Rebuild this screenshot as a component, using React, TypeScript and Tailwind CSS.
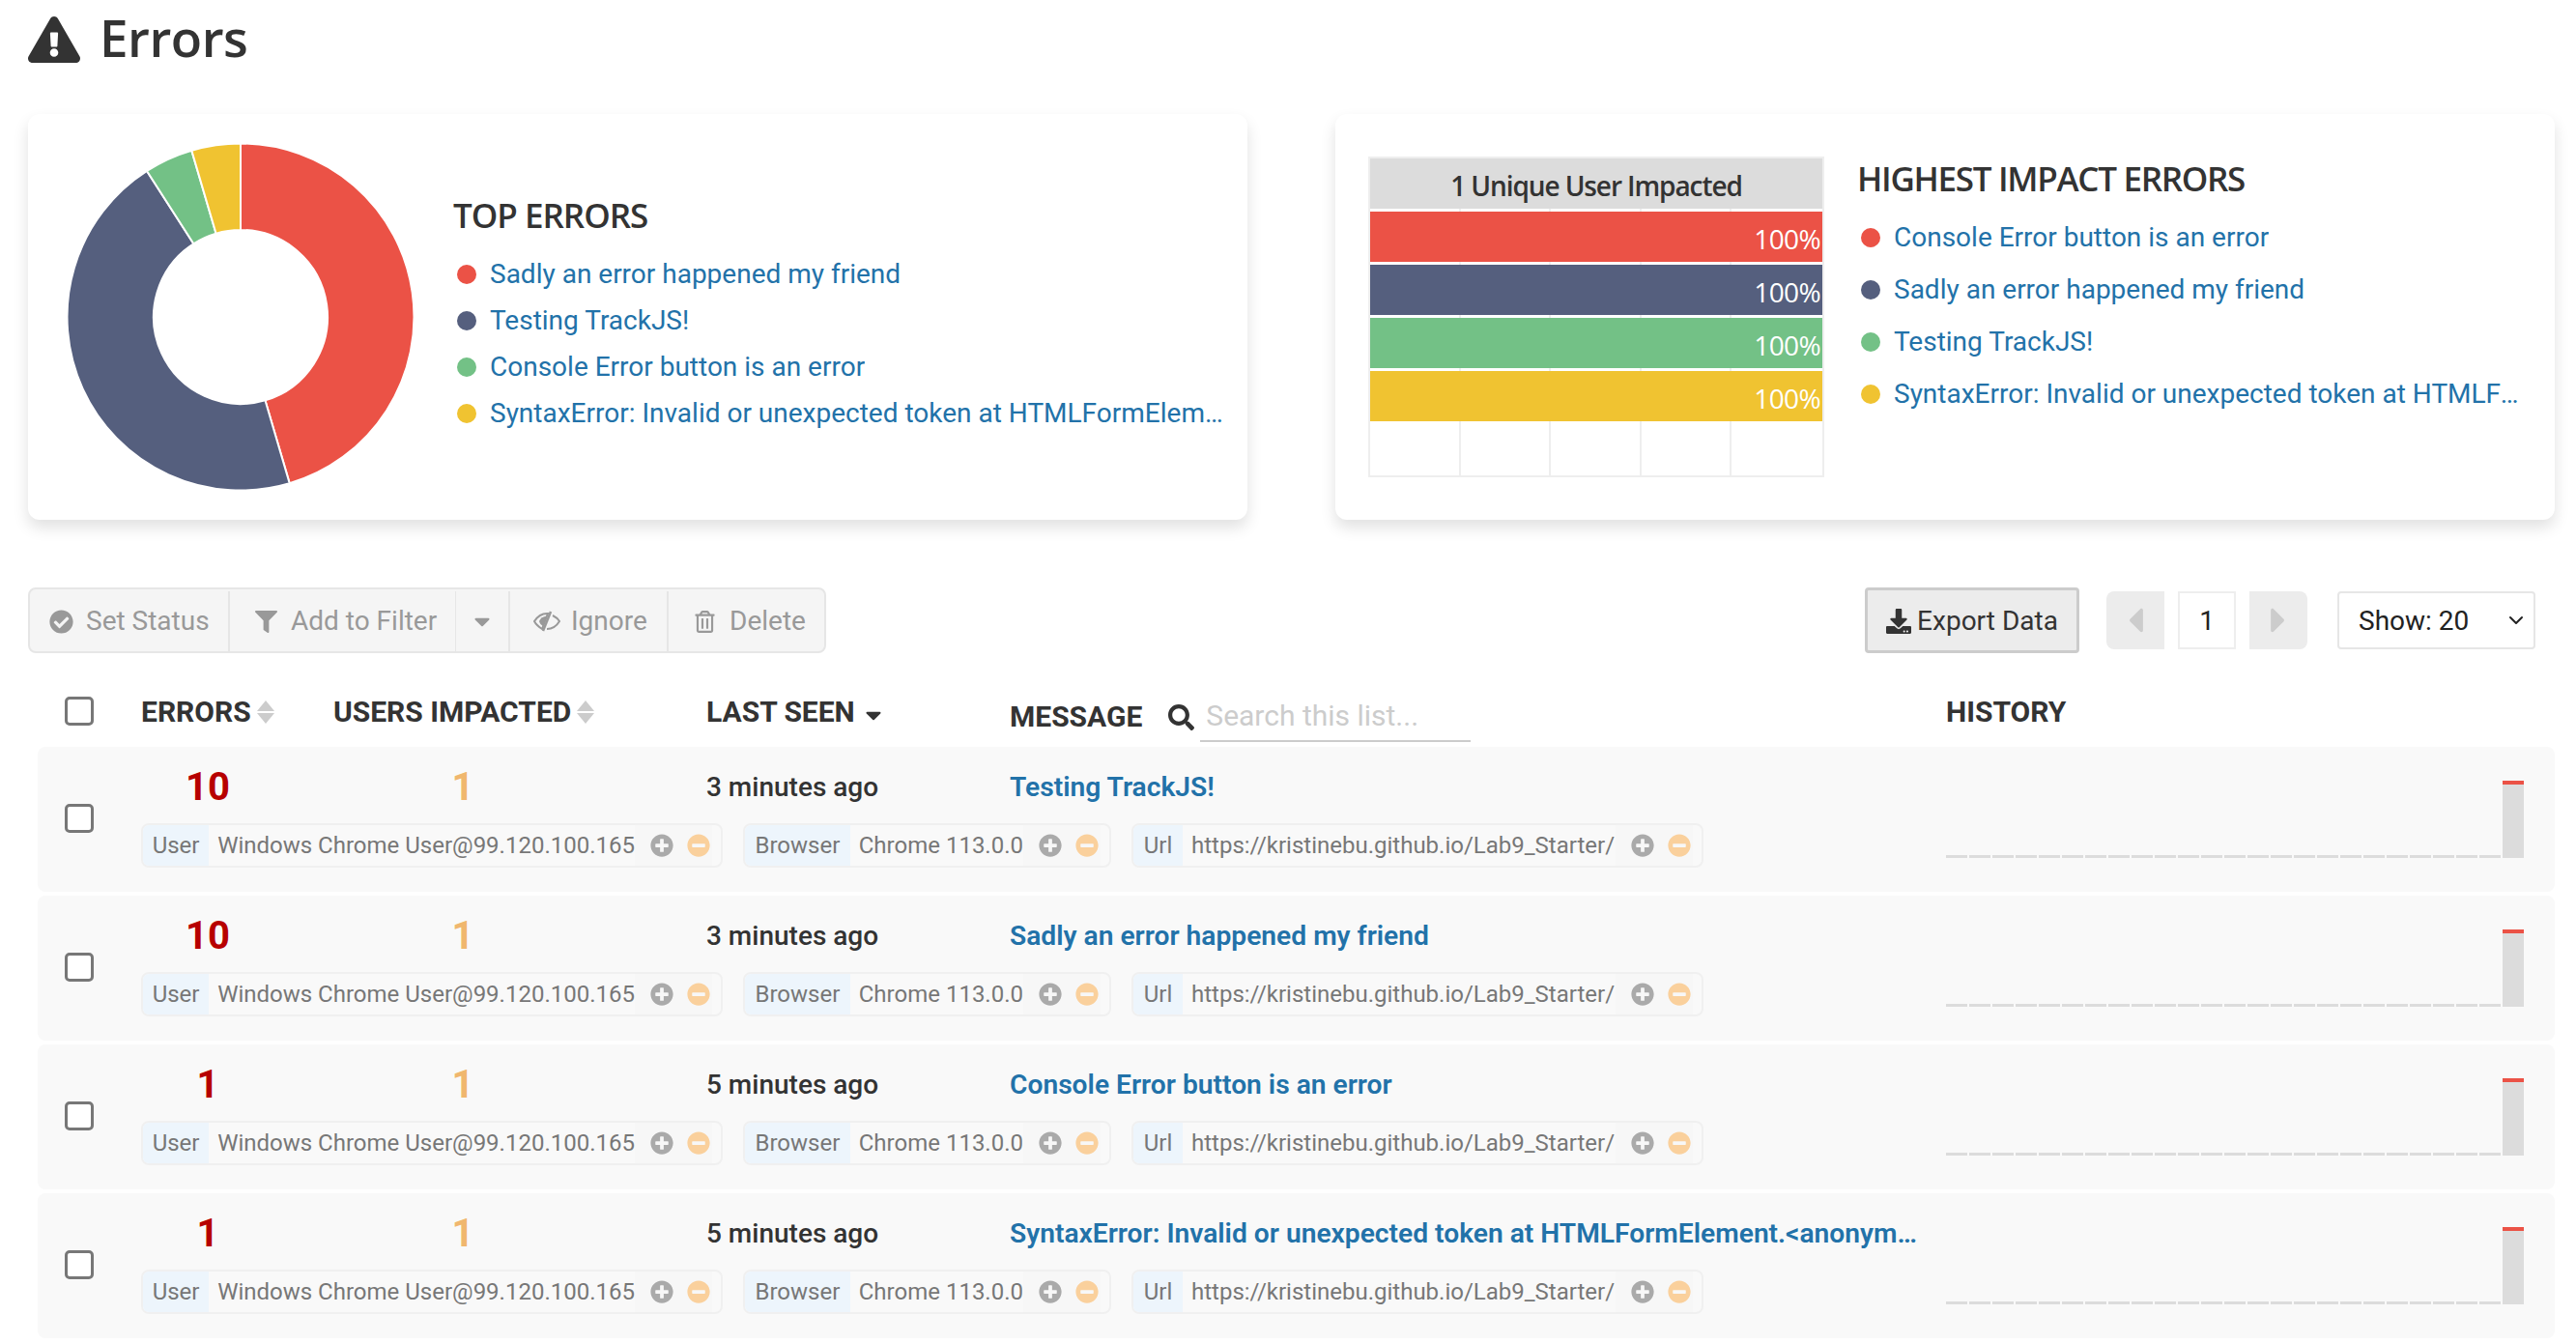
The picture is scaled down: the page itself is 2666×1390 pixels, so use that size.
import {
  FaCaretDown,
  FaCaretLeft,
  FaCaretRight,
  FaCheckCircle,
  FaDownload,
  FaExclamationTriangle,
  FaFilter,
  FaMinusCircle,
  FaPlusCircle,
  FaRegTrashAlt,
  FaSearch,
} from "react-icons/fa";
import { ChevronDown } from "lucide-react";

const RED = "#eb5246";
const BLUE = "#555f7e";
const GREEN = "#73c186";
const YELLOW = "#f0c331";

const arc = (start: number, end: number) => {
  const point = (r: number, deg: number) => {
    const a = (deg * Math.PI) / 180;
    return `${180 + r * Math.sin(a)} ${180 - r * Math.cos(a)}`;
  };
  return `M${point(179.5, start)} A179.5 179.5 0 ${end - start > 180 ? 1 : 0} 1 ${point(179.5, end)} L${point(90, end)} A90 90 0 ${end - start > 180 ? 1 : 0} 0 ${point(90, start)} Z`;
};

const Donut = () => (
  <svg width="360" height="360" viewBox="0 0 360 360" className="shrink-0">
    <path d={arc(0, 163.6)} fill={RED} stroke="#fff" strokeWidth="2" />
    <path d={arc(163.6, 327.3)} fill={BLUE} stroke="#fff" strokeWidth="2" />
    <path d={arc(327.3, 343.6)} fill={GREEN} stroke="#fff" strokeWidth="2" />
    <path d={arc(343.6, 360)} fill={YELLOW} stroke="#fff" strokeWidth="2" />
  </svg>
);

const SortIcon = () => (
  <svg width="18" height="24" viewBox="0 0 18 24" className="ml-[6px] shrink-0 fill-[#ccc]">
    <path d="M9 0 L18 11 L0 11 Z" />
    <path d="M0 13 L18 13 L9 24 Z" />
  </svg>
);

const EyeIcon = () => (
  <svg width="28" height="22" viewBox="0 0 28 22" className="shrink-0">
    <path d="M1 11 C5 5 9 3 14 3 L15 3 L9 19 C6 17 3 15 1 11 Z" fill="none" stroke="#999" strokeWidth="2" />
    <path d="M6 11 C7 8 10 6 14 5.5 L10 16 C8 15 6.5 13 6 11 Z" fill="#999" />
    <path d="M18 1 L10 21" stroke="#999" strokeWidth="2.5" />
    <path d="M20 5 C23 6.5 25.5 8.5 27 11 C24 16 19 19 14 19" fill="none" stroke="#999" strokeWidth="2" />
  </svg>
);

const Legend = ({ items, gap }: { items: { label: string; color: string }[]; gap: string }) => (
  <ul className={`flex flex-col ${gap} font-['Roboto',sans-serif] text-[28px] leading-[34px] text-[#2272a9]`}>
    {items.map((item) => (
      <li key={item.label} className="flex items-center whitespace-nowrap">
        <span className="mr-[14px] ml-[4px] size-[20px] shrink-0 rounded-full" style={{ backgroundColor: item.color }} />
        <span className="min-w-0 truncate">{item.label}</span>
      </li>
    ))}
  </ul>
);

const Tag = ({ label, labelWidth, value, width }: { label: string; labelWidth: string; value: string; width: string }) => (
  <div className={`flex h-[46px] items-center overflow-hidden rounded-[8px] border-2 border-[#f0f0f0] text-[24px] text-[#777] ${width}`}>
    <span className={`flex h-full items-center justify-center bg-[#edf5fc] ${labelWidth}`}>{label}</span>
    <span className="ml-[9px] flex-1 whitespace-nowrap">{value}</span>
    <div className="mr-[9px] flex h-full items-center gap-[14px] bg-[#f7f7f7] pr-[2px] pl-[16px]">
      <FaPlusCircle className="text-[24px] text-[#aaa]" />
      <FaMinusCircle className="text-[24px] text-[#fad09c]" />
    </div>
  </div>
);

const History = () => (
  <div className="flex h-[80px] items-end gap-[2px]">
    {Array.from({ length: 24 }).map((_, i) => (
      <div key={i} className="h-[3px] w-[22px] bg-[#dcdcdc]" />
    ))}
    <div className="h-[80px] w-[22px] border-t-[4px] border-[#eb5246] bg-[#dcdcdc]" />
  </div>
);

const rows = [
  { errors: 10, seen: "3 minutes ago", message: "Testing TrackJS!" },
  { errors: 10, seen: "3 minutes ago", message: "Sadly an error happened my friend" },
  { errors: 1, seen: "5 minutes ago", message: "Console Error button is an error" },
  { errors: 1, seen: "5 minutes ago", message: "SyntaxError: Invalid or unexpected token at HTMLFormElement.<anonymous>(index.html:1:1)" },
];

const checkbox = "size-[30px] appearance-none rounded-[5px] border-[3px] border-[#777] bg-white";

export default function App() {
  return (
    <div className="h-[1390px] w-[2666px] overflow-hidden bg-white font-['Roboto',sans-serif] text-[#333]">
      {/* Title */}
      <div className="flex h-[118px] items-start px-[29px] pt-[7px]">
        <FaExclamationTriangle className="mt-[7px] text-[54px] text-[#333]" />
        <h1 className="ml-[20px] font-['Open_Sans',sans-serif] text-[53px] leading-[64px] font-semibold tracking-[-0.5px]">Errors</h1>
      </div>

      {/* Charts */}
      <div className="flex justify-between pr-[22px] pl-[29px]">
        <div className="flex h-[420px] w-[1262px] items-center rounded-[12px] bg-white pl-[40px] shadow-[0_8px_16px_rgba(0,0,0,0.12)]">
          <Donut />
          <div className="ml-[40px] w-[800px]">
            <h2 className="-mt-[10px] mb-[22px] font-['Open_Sans',sans-serif] text-[35px] leading-[44px] font-semibold tracking-[-1px]">TOP ERRORS</h2>
            <Legend
              gap="gap-[14px]"
              items={[
                { label: "Sadly an error happened my friend", color: RED },
                { label: "Testing TrackJS!", color: BLUE },
                { label: "Console Error button is an error", color: GREEN },
                { label: "SyntaxError: Invalid or unexpected token at HTMLFormElement.<anonymous>", color: YELLOW },
              ]}
            />
          </div>
        </div>

        <div className="flex h-[420px] w-[1262px] items-start rounded-[12px] bg-white pt-[44px] pl-[34px] shadow-[0_8px_16px_rgba(0,0,0,0.12)]">
          <div className="relative h-[332px] w-[472px] shrink-0 border-2 border-[#eee]">
            <div className="absolute inset-0 grid grid-cols-5">
              <div className="border-r-2 border-[#eee]" />
              <div className="border-r-2 border-[#eee]" />
              <div className="border-r-2 border-[#eee]" />
              <div className="border-r-2 border-[#eee]" />
              <div />
            </div>
            <div className="relative flex flex-col gap-[3px]">
              <div className="flex h-[52px] items-center justify-center bg-[#dcdcdc] pt-[4px] font-['Open_Sans',sans-serif] text-[28px] font-semibold tracking-[-1.1px]">
                1 Unique User Impacted
              </div>
              {[RED, BLUE, GREEN, YELLOW].map((color) => (
                <div key={color} className="flex h-[52px] items-center justify-end pt-[3px] pr-[2px] font-['Open_Sans',sans-serif] text-[28px] tracking-[-0.6px] text-white" style={{ backgroundColor: color }}>
                  100%
                </div>
              ))}
            </div>
          </div>
          <div className="ml-[34px] w-[692px] pt-[1px]">
            <h2 className="mb-[22px] font-['Open_Sans',sans-serif] text-[35px] leading-[44px] font-semibold tracking-[-1.3px]">HIGHEST IMPACT ERRORS</h2>
            <Legend
              gap="gap-[20px]"
              items={[
                { label: "Console Error button is an error", color: RED },
                { label: "Sadly an error happened my friend", color: BLUE },
                { label: "Testing TrackJS!", color: GREEN },
                { label: "SyntaxError: Invalid or unexpected token at HTMLFormElement.<anonymous>", color: YELLOW },
              ]}
            />
          </div>
        </div>
      </div>

      {/* Toolbar */}
      <div className="mt-[70px] flex h-[68px] items-center pr-[42px] pl-[29px] text-[28px]">
        <div className="flex h-[68px] w-[826px] rounded-[8px] border-2 border-[#e6e6e6] bg-[#f5f5f5] pt-[2px] text-[#999]">
          <div className="flex w-[207px] items-center gap-[13px] border-r-2 border-[#e6e6e6] pl-[20px]"><FaCheckCircle className="text-[25px]" />Set Status</div>
          <div className="flex w-[234px] items-center gap-[14px] border-r border-[#e6e6e6] pl-[26px]"><FaFilter className="text-[23px]" />Add to Filter</div>
          <div className="flex w-[56px] items-center justify-center border-r-2 border-[#e6e6e6]"><FaCaretDown className="text-[26px]" /></div>
          <div className="flex w-[164px] items-center gap-[11px] border-r-2 border-[#e6e6e6] pl-[24px]"><EyeIcon />Ignore</div>
          <div className="flex flex-1 items-center gap-[14px] pl-[26px]"><FaRegTrashAlt className="text-[23px]" />Delete</div>
        </div>
        <button className="ml-auto flex h-[68px] w-[222px] items-center justify-center gap-[6px] rounded-[4px] border-[3px] border-[#ccc] bg-[#ececec] pt-[2px]">
          <FaDownload className="text-[26px]" />Export Data
        </button>
        <div className="ml-[28px] flex h-[60px] items-stretch gap-[14px]">
          <div className="flex w-[60px] items-center justify-center rounded-l-[8px] bg-[#ececec] text-[#ccc]"><FaCaretLeft className="text-[42px]" /></div>
          <div className="flex w-[60px] items-center justify-center border-2 border-[#eee] pt-[2px] text-[#222]">1</div>
          <div className="flex w-[60px] items-center justify-center rounded-r-[8px] bg-[#ececec] text-[#ccc]"><FaCaretRight className="text-[42px]" /></div>
        </div>
        <div className="relative ml-[31px] h-[60px] w-[205px]">
          <select className="h-[60px] w-[205px] appearance-none rounded-[4px] border-2 border-[#e6e6e6] bg-white pt-[2px] pl-[20px] text-[#222]">
            <option>Show: 20</option>
          </select>
          <ChevronDown size={24} strokeWidth={2} className="pointer-events-none absolute top-[18px] right-[8px] text-[#222]" />
        </div>
      </div>

      {/* Table header */}
      <div className="mt-[30px] flex h-[67px] items-start text-[30px] leading-[62px] font-bold">
        <div className="flex h-[60px] w-[146px] items-center pl-[67px]"><input type="checkbox" className={checkbox} /></div>
        <div className="flex w-[199px] items-center">ERRORS<SortIcon /></div>
        <div className="flex w-[386px] items-center">USERS IMPACTED<SortIcon /></div>
        <div className="flex w-[314px] items-center">LAST SEEN<FaCaretDown className="mt-[6px] ml-[6px] text-[26px]" /></div>
        <div className="flex w-[969px] items-center pt-[5px]">MESSAGE
          <FaSearch className="ml-[27px] text-[27px]" />
          <span className="ml-[6px] w-[280px] border-b-2 border-[#ccc] pl-[6px] text-[30px] leading-[50px] font-normal text-[#ccc]">Search this list...</span>
        </div>
        <div>HISTORY</div>
      </div>

      {/* Rows */}
      <div className="mr-[22px] ml-[39px] flex flex-col gap-[4px]">
        {rows.map((row) => (
          <div key={row.message} className="flex h-[150px] rounded-[8px] bg-[#f9f9f9]">
            <div className="flex w-[107px] items-center pl-[28px] pb-[2px]"><input type="checkbox" className={checkbox} /></div>
            <div className="w-[1868px] pt-[18px]">
              <div className="flex h-[48px] items-center">
                <div className="w-[138px] text-center text-[40px] font-bold text-[#b70000]">{row.errors}</div>
                <div className="ml-[62px] w-[266px] text-center text-[40px] font-bold text-[#f0b76e]">1</div>
                <div className="ml-[119px] w-[314px] text-[28px] font-medium">{row.seen}</div>
                <div className="w-[950px] truncate text-[28.2px] font-semibold text-[#2272a9]">{row.message}</div>
              </div>
              <div className="mt-[13px] flex gap-[21px]">
                <Tag label="User" labelWidth="w-[69px]" value="Windows Chrome User@99.120.100.165" width="w-[602px]" />
                <Tag label="Browser" labelWidth="w-[109px]" value="Chrome 113.0.0" width="w-[381px]" />
                <Tag label="Url" labelWidth="w-[51px]" value="https://kristinebu.github.io/Lab9_Starter/" width="w-[592px]" />
              </div>
            </div>
            <div className="pt-[35px]"><History /></div>
          </div>
        ))}
      </div>
    </div>
  );
}
